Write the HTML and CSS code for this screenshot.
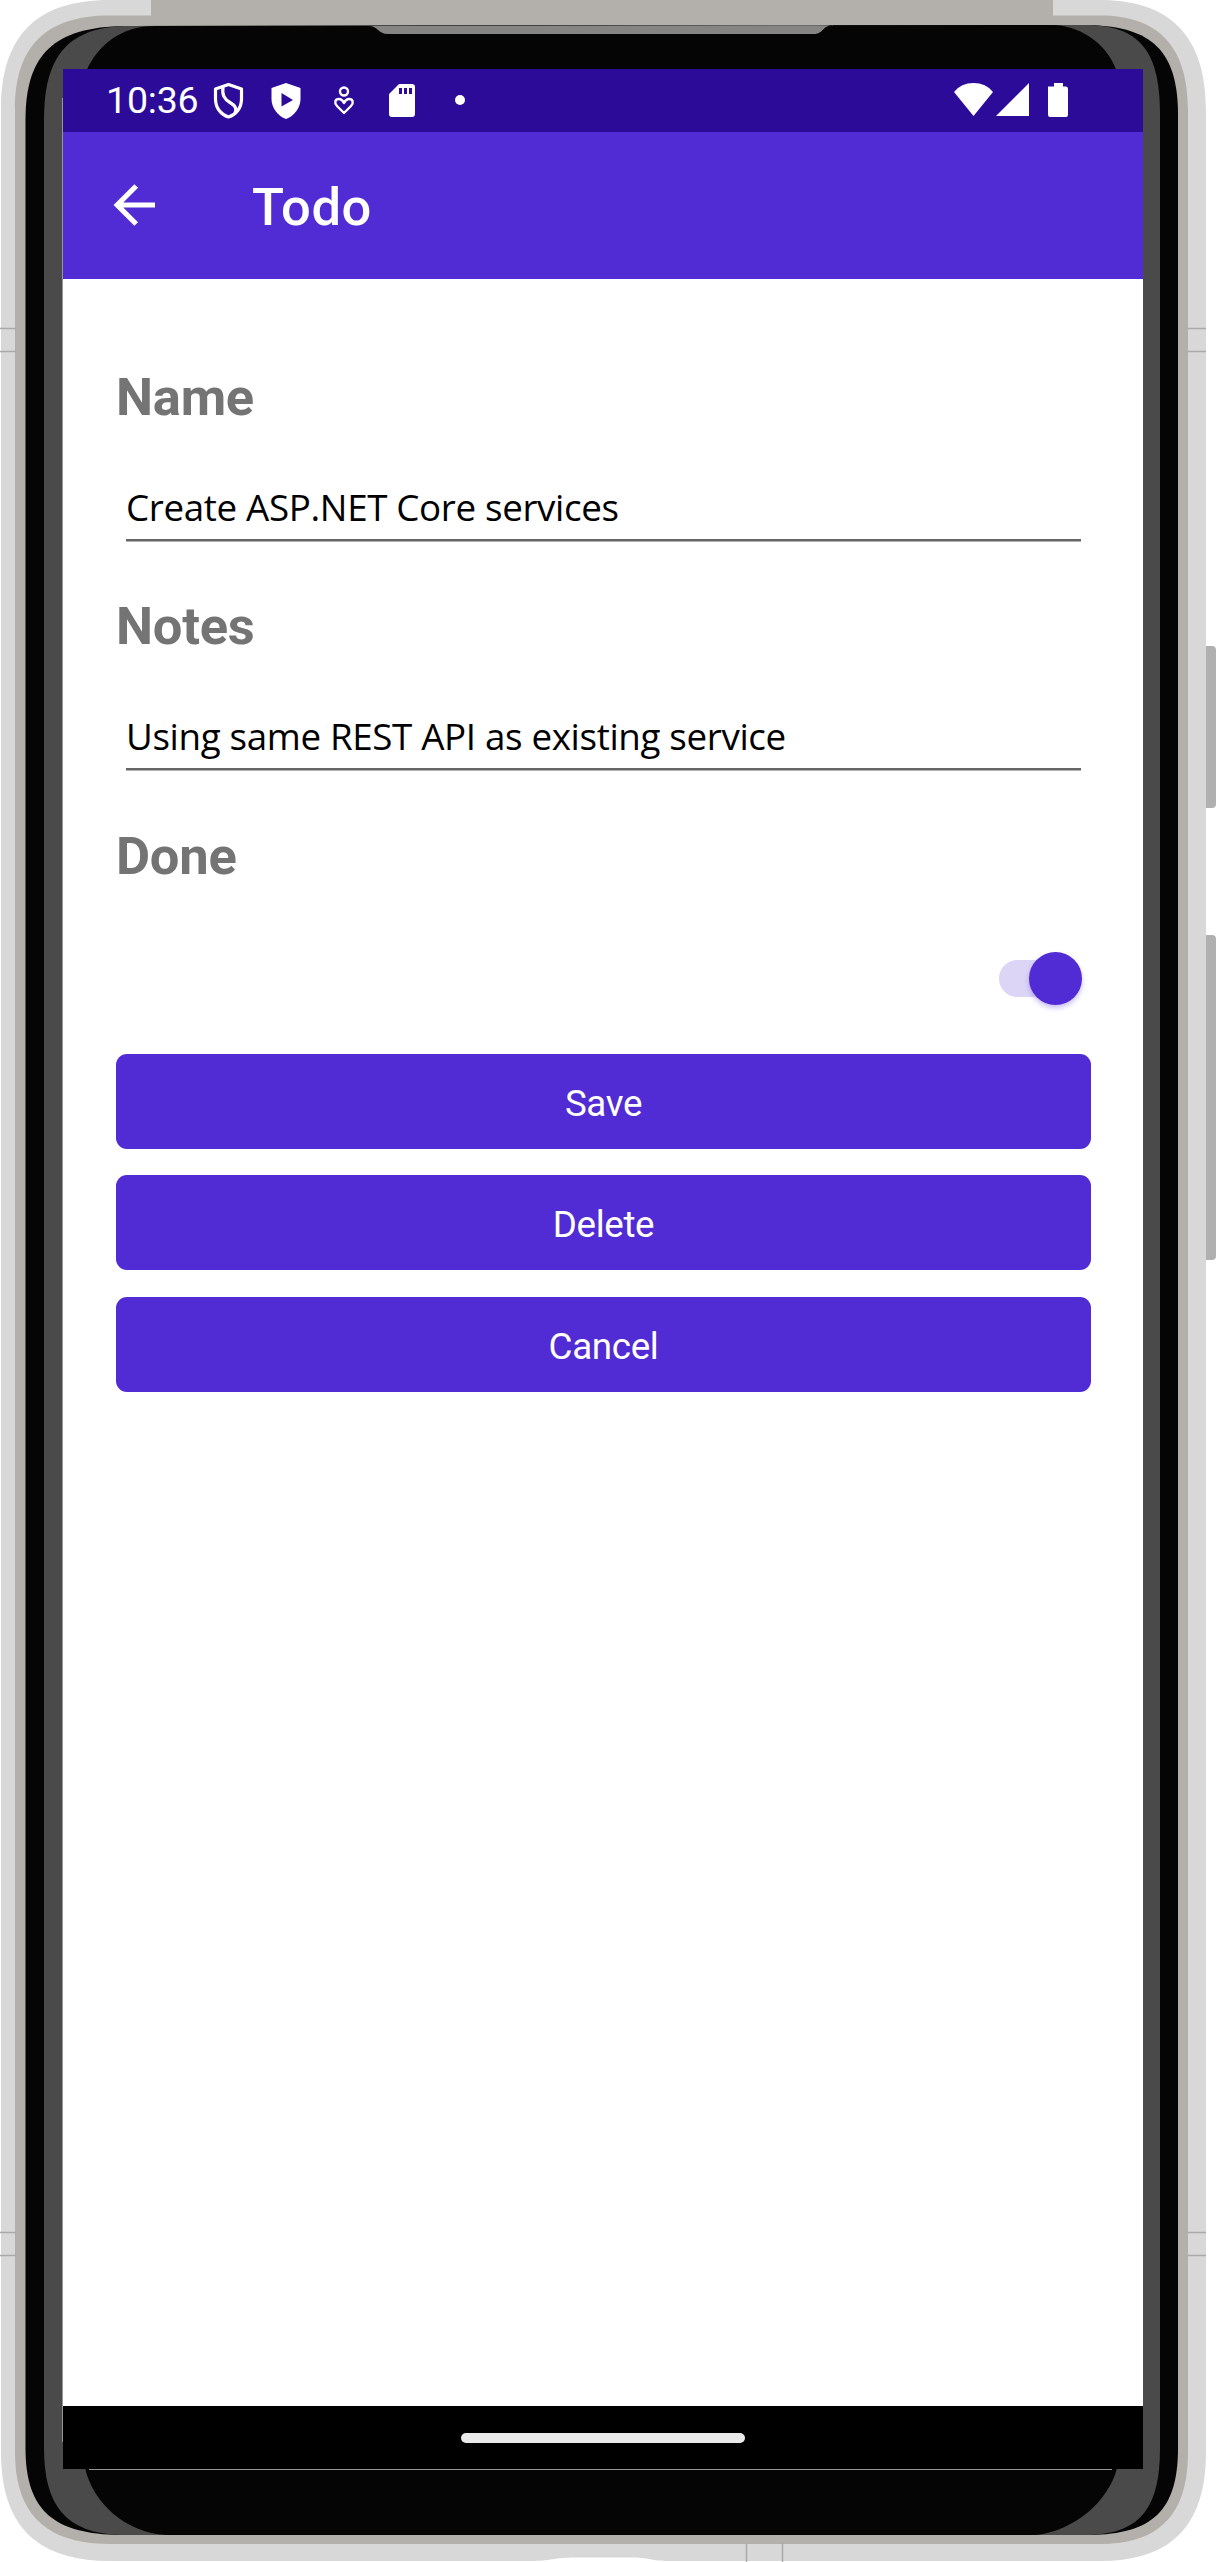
FILE: index.html
```html
<!DOCTYPE html>
<html lang="en">
<head>
<meta charset="utf-8">
<title>Todo</title>
<link rel="stylesheet" href="styles.css">
</head>
<body>
<div class="device">
  <svg class="device-frame" viewBox="0 0 1216 2562" aria-hidden="true">
    <path class="side-button" d="M1206 646h6q4 0 4 4v154q0 4-4 4h-6zM1206 935h6q4 0 4 4v317q0 4-4 4h-6z"/>
    <path class="shell" d="M110 0H1100C1170 0 1206 36 1206 110V2452C1206 2525 1172 2561 1100 2561H670C650 2561 650 2557.500 630 2557.500H575C555 2557.500 550 2561 530 2561H110C36 2561 1 2525 1 2452V110C1 36 36 0 110 0Z"/>
    <path class="band" d="M151 0H1053V15.500H1100C1158 15.500 1188 46 1188 110V2452C1188 2514 1160 2544 1100 2544H110C46 2544 15 2514 15 2452V110C15 46 46 15.500 110 15.500H151Z"/>
    <path class="seam" d="M0 328.500H16M0 351.500H16M1188 328.500H1206M1188 351.500H1206M0 2232.500H16M0 2255.500H16M1188 2232.500H1206M1188 2255.500H1206M746.500 2543V2562M782.500 2543V2562"/>
    <path class="bezel" d="M125 26L1090 25C1151 27 1178 50 1178 115V2448C1178 2512 1151 2534 1090 2535H120C55 2534 25.500 2512 25.500 2448V120C25.500 54 54 27 125 26Z"/>
    <path class="glass-edge" d="M125 26L1090 25C1142 27 1160 54 1160 115V2448C1160 2506 1142 2533 1090 2535H120C66 2533 44 2506 44 2448V120C44 58 66 28 125 26Z"/>
    <path class="glass" d="M86 72C98 44 122 26 155 26L1055 25C1083 27 1108 45 1117 72V2468C1109 2501 1074 2531 1036 2535H166C126 2533 93 2503 85 2468Z"/>
    <path class="speaker" d="M369 26C378 26 378 34 388 34H814C824 34 822 25 834 25Z"/>
    <path class="screen-edge" d="M62.500 98V2442M89 2469.500H1112"/>
  </svg>
  <div class="screen">
    <div class="status-bar">
      <span class="clock">10:36</span>
      <svg class="status-left" viewBox="0 0 280 63">
        <g class="outline">
          <path d="M19.500 15.500L32.500 20V30C32.500 39 27 45.500 19.500 48C12 45.500 6.500 39 6.500 30V20Z"/>
          <path d="M14 18C13 26 15 30 21 33.500C26 36.500 28 39 26 44"/>
        </g>
        <path class="solid" fill-rule="evenodd" d="M77 14L91.500 19V30C91.500 39 85 47 77 50C69 47 62.500 39 62.500 30V19ZM72.500 24V37.500L84 31Z"/>
        <g class="outline thin">
          <circle cx="135" cy="22.500" r="4"/>
          <path d="M135 44L128 37C125 34 126 30 130 30C133 30 134 32 135 34C136 32 137 30 140 30C144 30 145 34 142 37Z"/>
        </g>
        <path class="solid" fill-rule="evenodd" d="M190 15H203Q206 15 206 18V45Q206 48 203 48H183Q180 48 180 45V25ZM190 19V25H193V19ZM195 19V25H198V19ZM200 19V25H203V19Z"/>
        <circle class="solid" cx="251" cy="31" r="5"/>
      </svg>
      <svg class="status-right" viewBox="0 0 116 63">
        <path class="solid" d="M0 23Q7 14 19.500 14T39 23L19.500 47ZM42 47L75 14V47ZM94 17.500H100V14H109V17.500H112Q114 17.500 114 20V45.500Q114 48 112 48H96Q94 48 94 45.500Z"/>
      </svg>
    </div>
    <header class="app-bar">
      <svg class="back" viewBox="0 0 42 42"><path d="M42 21H5M23.200 2L4.200 21L23.200 40"/></svg>
      <h1 class="title">Todo</h1>
    </header>
    <main class="form">
      <h2 class="label">Name</h2>
      <div class="entry">Create ASP.NET Core services</div>
      <h2 class="label">Notes</h2>
      <div class="entry">Using same REST API as existing service</div>
      <h2 class="label done">Done</h2>
      <div class="switch-row"><div class="switch"><div class="thumb"></div></div></div>
      <div class="actions">
        <button class="action">Save</button>
        <button class="action">Delete</button>
        <button class="action last">Cancel</button>
      </div>
    </main>
    <footer class="nav-bar"><div class="handle"></div></footer>
  </div>
</div>
</body>
</html>
```
FILE: styles.css
```css
* { box-sizing: border-box; }
body { margin: 0; background: #fff; font-family: Roboto, sans-serif; }
.device { display: grid; width: 1216px; height: 2562px; overflow: hidden; }
.device-frame { grid-area: 1 / 1; width: 1216px; height: 2562px; }
.side-button { fill: #b0b0b0; }
.shell { fill: #d8d8d8; }
.band { fill: #b3afaa; }
.seam { stroke: #aaa; stroke-width: 1.5; fill: none; }
.bezel, .glass { fill: #050505; }
.glass-edge { fill: #4a4a4a; }
.speaker { fill: #858585; }
.screen-edge { stroke: #969696; fill: none; }
.screen {
  grid-area: 1 / 1;
  display: flex;
  flex-direction: column;
  width: 1080px;
  height: 2400px;
  margin: 69px 0 0 63px;
  background: #fff;
}
.status-bar {
  display: flex;
  height: 63px;
  padding: 0 73px 0 43px;
  background: #2b0b98;
  color: #fff;
}
.clock { width: 103px; font-size: 37.5px; line-height: 63px; letter-spacing: -0.2px; white-space: nowrap; }
.status-left { width: 280px; height: 63px; }
.status-right { width: 116px; height: 63px; margin-left: auto; }
.solid { fill: #fff; }
.outline { fill: none; stroke: #fff; stroke-width: 3.2; stroke-linejoin: round; }
.thin { stroke-width: 2.4; }
.app-bar {
  display: flex;
  align-items: center;
  height: 147px;
  padding-left: 50px;
  background: #512bd4;
  color: #fff;
}
.back { width: 42px; height: 42px; margin-bottom: 1px; fill: none; stroke: #fff; stroke-width: 5.2; }
.title { margin: 3px 0 0 97px; font-size: 52.5px; font-weight: 500; line-height: 60px; letter-spacing: 0.6px; }
.form { flex: 1; padding: 79px 52px 0 53px; }
.label { height: 78px; margin: 0; color: #747474; font-size: 52.5px; font-weight: 700; line-height: 78px; letter-spacing: -0.25px; }
.done { margin-top: 47px; }
.entry {
  height: 105px;
  margin: 0 10px 46px;
  border-bottom: 2px solid #666;
  box-shadow: 0 1px #b2b2b2;
  font: 36.75px/143px "Open Sans", sans-serif;
  letter-spacing: -0.35px;
  white-space: nowrap;
}
.switch-row { display: flex; justify-content: flex-end; height: 159px; padding: 57px 9px 0 0; }
.switch {
  display: flex;
  justify-content: flex-end;
  width: 83px;
  height: 53px;
  background:
    radial-gradient(circle at 18.5px 18.5px, #dcd5f6 18px, transparent 19px) 0 8px / 19px 37px no-repeat,
    linear-gradient(#dcd5f6, #dcd5f6) 18px 8px / 40px 37px no-repeat;
}
.thumb { width: 53px; height: 53px; border-radius: 50%; background: #512bd4; box-shadow: 0 3px 5px rgba(81, 43, 212, 0.3); }
.actions { display: grid; gap: 26px; }
.action {
  height: 95px;
  padding: 4px 0 0;
  border: 0;
  border-radius: 11px;
  background: #512bd4;
  color: #fff;
  font: 36.75px Roboto, sans-serif;
  letter-spacing: -0.35px;
}
.last { margin-top: 1px; }
.nav-bar { display: flex; justify-content: center; height: 63px; padding-top: 27px; background: #000; }
.handle { width: 284px; height: 10px; border-radius: 5px; background: #ebebeb; }
```
